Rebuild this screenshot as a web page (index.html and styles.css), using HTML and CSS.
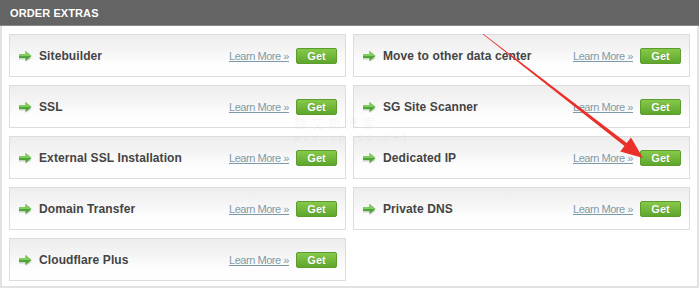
FILE: index.html
```html
<!DOCTYPE html>
<html lang="en">
<head>
  <meta charset="UTF-8">
  <meta name="viewport" content="width=device-width, initial-scale=1.0">
  <title>Order Extras</title>
  <link rel="stylesheet" href="styles.css">
</head>
<body>
  <div class="extras">
    <div class="extras-header">ORDER EXTRAS</div>

    <div class="extras-grid">
      <div class="extra">
        <span class="extra-icon"><svg width="13" height="11" viewBox="0 0 13 11"><path class="arrow-shadow" d="M0 5.5H6.5V2L12.5 7L6.5 11V8.5H0Z"/><path class="arrow-body" d="M0 3H6.5V0L12.5 5L6.5 10V7H0Z"/><path class="arrow-light" d="M0 3H6.5V0L12.5 5H0Z"/></svg></span>
        <span class="extra-name">Sitebuilder</span>
        <a href="#" class="learn-more">Learn More »</a>
        <button class="get-btn">Get</button>
      </div>

      <div class="extra">
        <span class="extra-icon"><svg width="13" height="11" viewBox="0 0 13 11"><path class="arrow-shadow" d="M0 5.5H6.5V2L12.5 7L6.5 11V8.5H0Z"/><path class="arrow-body" d="M0 3H6.5V0L12.5 5L6.5 10V7H0Z"/><path class="arrow-light" d="M0 3H6.5V0L12.5 5H0Z"/></svg></span>
        <span class="extra-name">Move to other data center</span>
        <a href="#" class="learn-more">Learn More »</a>
        <button class="get-btn">Get</button>
      </div>

      <div class="extra">
        <span class="extra-icon"><svg width="13" height="11" viewBox="0 0 13 11"><path class="arrow-shadow" d="M0 5.5H6.5V2L12.5 7L6.5 11V8.5H0Z"/><path class="arrow-body" d="M0 3H6.5V0L12.5 5L6.5 10V7H0Z"/><path class="arrow-light" d="M0 3H6.5V0L12.5 5H0Z"/></svg></span>
        <span class="extra-name">SSL</span>
        <a href="#" class="learn-more">Learn More »</a>
        <button class="get-btn">Get</button>
      </div>

      <div class="extra">
        <span class="extra-icon"><svg width="13" height="11" viewBox="0 0 13 11"><path class="arrow-shadow" d="M0 5.5H6.5V2L12.5 7L6.5 11V8.5H0Z"/><path class="arrow-body" d="M0 3H6.5V0L12.5 5L6.5 10V7H0Z"/><path class="arrow-light" d="M0 3H6.5V0L12.5 5H0Z"/></svg></span>
        <span class="extra-name">SG Site Scanner</span>
        <a href="#" class="learn-more">Learn More »</a>
        <button class="get-btn">Get</button>
      </div>

      <div class="extra">
        <span class="extra-icon"><svg width="13" height="11" viewBox="0 0 13 11"><path class="arrow-shadow" d="M0 5.5H6.5V2L12.5 7L6.5 11V8.5H0Z"/><path class="arrow-body" d="M0 3H6.5V0L12.5 5L6.5 10V7H0Z"/><path class="arrow-light" d="M0 3H6.5V0L12.5 5H0Z"/></svg></span>
        <span class="extra-name">External SSL Installation</span>
        <a href="#" class="learn-more">Learn More »</a>
        <button class="get-btn">Get</button>
      </div>

      <div class="extra">
        <span class="extra-icon"><svg width="13" height="11" viewBox="0 0 13 11"><path class="arrow-shadow" d="M0 5.5H6.5V2L12.5 7L6.5 11V8.5H0Z"/><path class="arrow-body" d="M0 3H6.5V0L12.5 5L6.5 10V7H0Z"/><path class="arrow-light" d="M0 3H6.5V0L12.5 5H0Z"/></svg></span>
        <span class="extra-name">Dedicated IP</span>
        <a href="#" class="learn-more">Learn More »</a>
        <button class="get-btn">Get</button>
      </div>

      <div class="extra">
        <span class="extra-icon"><svg width="13" height="11" viewBox="0 0 13 11"><path class="arrow-shadow" d="M0 5.5H6.5V2L12.5 7L6.5 11V8.5H0Z"/><path class="arrow-body" d="M0 3H6.5V0L12.5 5L6.5 10V7H0Z"/><path class="arrow-light" d="M0 3H6.5V0L12.5 5H0Z"/></svg></span>
        <span class="extra-name">Domain Transfer</span>
        <a href="#" class="learn-more">Learn More »</a>
        <button class="get-btn">Get</button>
      </div>

      <div class="extra">
        <span class="extra-icon"><svg width="13" height="11" viewBox="0 0 13 11"><path class="arrow-shadow" d="M0 5.5H6.5V2L12.5 7L6.5 11V8.5H0Z"/><path class="arrow-body" d="M0 3H6.5V0L12.5 5L6.5 10V7H0Z"/><path class="arrow-light" d="M0 3H6.5V0L12.5 5H0Z"/></svg></span>
        <span class="extra-name">Private DNS</span>
        <a href="#" class="learn-more">Learn More »</a>
        <button class="get-btn">Get</button>
      </div>

      <div class="extra">
        <span class="extra-icon"><svg width="13" height="11" viewBox="0 0 13 11"><path class="arrow-shadow" d="M0 5.5H6.5V2L12.5 7L6.5 11V8.5H0Z"/><path class="arrow-body" d="M0 3H6.5V0L12.5 5L6.5 10V7H0Z"/><path class="arrow-light" d="M0 3H6.5V0L12.5 5H0Z"/></svg></span>
        <span class="extra-name">Cloudflare Plus</span>
        <a href="#" class="learn-more">Learn More »</a>
        <button class="get-btn">Get</button>
      </div>
    </div>

    <div class="watermark">
      <span class="watermark-title">魏艾斯博客</span>
      <span class="watermark-url">www.vpsss.net</span>
    </div>

    <svg class="pointer-arrow" width="700" height="290" viewBox="0 0 700 290">
      <polygon points="482.8,34.3 624.5,145.9 620.2,151.4 643,158 631,137.6 626.7,143.1 483.2,33.7"/>
    </svg>
  </div>
</body>
</html>
```

FILE: styles.css
```css
:root {
  --header-bg: #646464;
  --panel-border: #e2e2e2;
  --card-border: #dcdcdc;
  --title-color: #444444;
  --link-color: #7d9aa8;
  --green-top: #86c94a;
  --green-bottom: #5ea62c;
  --arrow-red: #e9302a;
}

* {
  box-sizing: border-box;
  margin: 0;
  padding: 0;
}

body {
  font-family: 'Liberation Sans', Arial, sans-serif;
  background: #ffffff;
  width: 700px;
  height: 290px;
  overflow: hidden;
}

.extras {
  position: relative;
  width: 699px;
  height: 288px;
  border: 2px solid var(--panel-border);
  border-top: none;
}

.extras-header {
  height: 26px;
  margin: 0 -2px;
  padding: 8px 0 0 10px;
  background: var(--header-bg);
  border-bottom: 1px solid #8a8a8a;
  color: #ffffff;
  font-size: 11px;
  font-weight: bold;
  letter-spacing: 0.1px;
  line-height: 11px;
}

.extras-grid {
  display: grid;
  grid-template-columns: 337px 337px;
  grid-auto-rows: 43px;
  column-gap: 7px;
  row-gap: 8px;
  padding: 8px 7px 0 7px;
}

.extra {
  display: flex;
  align-items: center;
  padding: 0 8px 0 9px;
  border: 1px solid var(--card-border);
  background: linear-gradient(to bottom, #ededed 0%, #f4f4f4 35%, #fdfdfd 70%, #ffffff 100%);
}

.extra-icon {
  display: flex;
  width: 13px;
  height: 11px;
  margin-top: 1px;
}

.arrow-shadow {
  fill: #c9d3c6;
}

.arrow-body {
  fill: #4fa43a;
}

.arrow-light {
  fill: #7fcd5f;
}

.extra-name {
  flex: 1;
  margin-left: 7px;
  color: var(--title-color);
  font-size: 12px;
  font-weight: bold;
  letter-spacing: 0.1px;
}

.learn-more {
  color: var(--link-color);
  font-size: 11px;
  letter-spacing: -0.45px;
  text-decoration: underline;
}

.get-btn {
  width: 41px;
  height: 16px;
  margin-left: 7px;
  margin-top: 1px;
  border: 1px solid #5b9c2c;
  border-radius: 2px;
  background: linear-gradient(to bottom, var(--green-top), var(--green-bottom));
  color: #ffffff;
  font-family: inherit;
  font-size: 11px;
  font-weight: bold;
  line-height: 14px;
  text-shadow: 0 0 1px rgba(0,0,0,0.25);
  cursor: pointer;
}

.watermark {
  position: absolute;
  left: 292px;
  top: 116px;
  display: flex;
  flex-direction: column;
  color: rgba(0,0,0,0.05);
  pointer-events: none;
}

.watermark-title {
  font-family: 'Noto Sans CJK SC', sans-serif;
  font-size: 13px;
  letter-spacing: 4px;
  line-height: 14px;
}

.watermark-url {
  margin-top: 4px;
  font-family: 'Liberation Mono', monospace;
  font-size: 10px;
  letter-spacing: 3px;
  line-height: 10px;
}

.pointer-arrow {
  position: absolute;
  left: -2px;
  top: 0;
  fill: var(--arrow-red);
  pointer-events: none;
}
```
